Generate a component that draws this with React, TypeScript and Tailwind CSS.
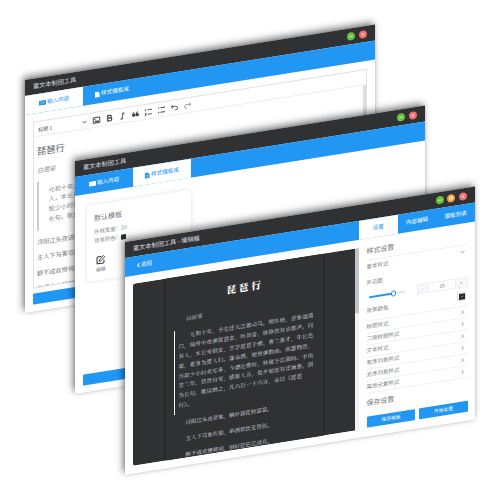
import React from 'react'

const PREFACE = [
  '元和十年，予左迁九江郡司马。明年秋，送客湓浦',
  '口，闻舟中夜弹琵琶者，听其音，铮铮然有京都声。问',
  '其人，本长安倡女，尝学琵琶于穆、曹二善才，年长色',
  '衰，委身为贾人妇。遂命酒，使快弹数曲。曲罢悯然，',
  '自叙少小时欢乐事，今漂沦憔悴，转徙于江湖间。予出',
  '官二年，恬然自安，感斯人言，是夕始觉有迁谪意。因',
  '为长句，歌以赠之，凡六百一十六言，命曰《琵琶',
  '行》。',
]
const VERSES = [
  '浔阳江头夜送客，枫叶荻花秋瑟瑟。',
  '主人下马客在船，举酒欲饮无管弦。',
  '醉不成欢惨将别，别时茫茫江浸月。',
]
const STYLE_GROUPS = ['标题样式', '二级标题样式', '文本样式', '有序列表样式', '无序列表样式', '其他元素样式']

function Dot({ kind }: { kind: 'min' | 'max' | 'close' }) {
  const bg = kind === 'min' ? 'bg-[#67c23a]' : kind === 'max' ? 'bg-[#f0a035]' : 'bg-[#f56c6c]'
  return (
    <span className={`flex size-[8px] items-center justify-center rounded-full ${bg}`}>
      <svg viewBox="0 0 8 8" className="size-[8px]" fill="none" stroke="#fff" strokeWidth="0.7">
        {kind === 'min' && <path d="M2.2 4h3.6" />}
        {kind === 'max' && <path d="M2.6 3.4h2.4v2.2H2.6zM3.4 3.2V2.4h2.2v2.2H5" />}
        {kind === 'close' && <path d="M2.6 2.6l2.8 2.8M5.4 2.6L2.6 5.4" />}
      </svg>
    </span>
  )
}

function Window({ place, title, max, bar, children }: {
  place: string
  title: string
  max?: boolean
  bar: React.ReactNode
  children: React.ReactNode
}) {
  return (
    <section className={`absolute ${place} flex h-[233px] w-[350px] origin-top-left -skew-y-9 flex-col bg-white shadow-[-2px_-3px_7px_rgba(0,0,0,0.5),0_0_3px_rgba(0,0,0,0.12)]`}>
      <header className="flex h-[16px] shrink-0 items-center justify-between bg-[#303133] pr-[8px] pl-[8px]">
        <h1 className="text-[6.2px] leading-[10px] whitespace-pre text-[#dcdee2]">{title}</h1>
        <div className="flex gap-[3.7px]">
          <Dot kind="min" />
          {max && <Dot kind="max" />}
          <Dot kind="close" />
        </div>
      </header>
      <nav className="flex h-[19.3px] shrink-0 bg-[#2196f3] text-[5.6px] leading-none text-white">{bar}</nav>
      {children}
    </section>
  )
}

function KeyboardIcon() {
  return (
    <svg viewBox="0 0 14 10" className="h-[5px] w-[7px]">
      <rect width="14" height="10" rx="1.4" fill="currentColor" />
      <path d="M2 3h10M2 5.2h10M4 7.6h6" stroke="#fff" strokeOpacity="0.6" strokeWidth="0.9" strokeDasharray="1.4 0.8" />
    </svg>
  )
}

function DocIcon() {
  return (
    <svg viewBox="0 0 10 13" className="h-[6px] w-[4.6px]">
      <path d="M0 1a1 1 0 011-1h5l4 4v8a1 1 0 01-1 1H1a1 1 0 01-1-1z" fill="currentColor" />
      <path d="M2.4 6.4h5.2M2.4 9.4h5.2" stroke="#fff" strokeOpacity="0.8" strokeWidth="1.1" />
    </svg>
  )
}

function MainTabs({ active }: { active: number }) {
  const on = 'bg-white text-[#2196f3]'
  return (
    <>
      <div className={`flex w-[58.2px] items-center justify-center gap-[1px] ${active === 0 ? on : ''}`}>
        <KeyboardIcon />输入内容
      </div>
      <div className={`flex w-[58.2px] items-center justify-center gap-[1px] ${active === 1 ? on : ''}`}>
        <DocIcon />样式模板库
      </div>
    </>
  )
}

function Tool({ children }: { children: React.ReactNode }) {
  return (
    <svg viewBox="0 0 18 18" className="size-[9px]" fill="none" stroke="#3c3c3c" strokeWidth="1.8">
      {children}
    </svg>
  )
}

function EditorWindow() {
  return (
    <Window place="top-[80.3px] left-[25px]" title="富文本制图工具" bar={<MainTabs active={0} />}>
      <div className="mx-[8px] mt-[8px] flex h-[167px] shrink-0 flex-col border border-[#e2e2e4] text-[#606266]">
        <div className="flex h-[15px] shrink-0 items-center border-b border-[#ededed] pl-[4px]">
          <div className="flex w-[49px] items-center justify-between">
            <span className="text-[5.2px] leading-none text-[#555]">标题 1</span>
            <svg viewBox="0 0 10 6" className="h-[3px] w-[5px]" fill="none" stroke="#444" strokeWidth="1.6"><path d="M1 1l4 4 4-4" /></svg>
          </div>
          <div className="ml-[4.5px] flex gap-[4.1px]">
            <Tool>
              <path d="M2.5 3.5h13v11h-13z" />
              <path d="M4 13l3.5-4 2.5 2 2-2 2.5 4z" fill="#3c3c3c" stroke="none" />
              <circle cx="6" cy="7" r="1.3" fill="#3c3c3c" stroke="none" />
            </Tool>
            <Tool><path strokeWidth="2.4" d="M5.5 3.5h4.500a2.500 2.500 0 010 5.200H5.500zM5.500 8.700h5.200a2.800 2.800 0 010 5.800H5.500z" /></Tool>
            <Tool><path d="M8 3.500h5M5 14.500h5M10.500 3.500l-3 11" /></Tool>
            <Tool>
              <path d="M3 9h5v4H3zM3 10c0-3 1-4 4-5M10 9h5v4h-5zM10 10c0-3 1-4 4-5" fill="#3c3c3c" strokeWidth="1.200" />
            </Tool>
            <Tool><path d="M7 4.500h9M7 13.500h9M3.200 2.500v4M2 11.500h2.500l-2.500 3.500h2.500" strokeWidth="1.600" /></Tool>
            <Tool><path d="M7 4.500h9M7 13.500h9M2 4.500h2.500M2 13.500h2.500" strokeWidth="1.800" /></Tool>
            <Tool><path d="M6 3L2.500 6.500 6 10M3 6.500h8.500a3.500 3.500 0 010 7H10" strokeWidth="1.600" /></Tool>
            <svg viewBox="0 0 18 18" className="size-[9px]" fill="none" stroke="#888" strokeWidth="1.500"><path d="M12 3l3.500 3.500L12 10M15 6.500H6.500a3.500 3.500 0 000 7H8" /></svg>
          </div>
        </div>
        <div className="flex min-h-0 flex-1 justify-between">
          <article className="overflow-hidden pl-[3px] text-[6.2px] whitespace-nowrap">
            <h2 className="mt-[7px] text-[9.3px] leading-[14px]">琵琶行</h2>
            <p className="mt-[7.5px] leading-[10px] text-[#909296] italic">白居易</p>
            <blockquote className="mt-[6px] h-[49px] border-l-2 border-[#ccc] py-[5px] pl-[9.5px] leading-[9.6px] text-[#8c8e92]">
              <p>元和十年，予左迁九江郡</p>
              <p>人，本长安倡女，尝学琵</p>
              <p>叙少小时欢乐事，今漂沦</p>
              <p>长句，歌以赠之，凡六百</p>
            </blockquote>
            <div className="mt-[4px] leading-[15.4px] text-[#7c7e82]">
              {VERSES.map((v) => <p key={v}>{v}</p>)}
              <p>忽闻水上琵琶声</p>
            </div>
          </article>
          <div className="w-[3px] bg-[#dcdde8]" />
        </div>
      </div>
      <div className="mx-[8px] mt-[5px] h-[10.5px] shrink-0 rounded-[1px] bg-[#2196f3]" />
    </Window>
  )
}

function TemplatesWindow() {
  return (
    <Window place="top-[161px] left-[75px]" title="富文本制图工具" bar={<MainTabs active={1} />}>
      <div className="mx-[8px] h-[180px] shrink-0 pt-[11.5px] pl-[4px]">
        <div className="h-[76px] w-[103.5px] rounded-[4px] bg-white pt-[8.5px] pl-[7px] text-[5.4px] text-[#8c8e92] shadow-[0_0_5px_rgba(0,0,0,0.12)]">
          <h2 className="text-[7px] leading-[10px] text-[#707276]">默认模板</h2>
          <p className="mt-[5px] leading-[9px]">外框宽度：20</p>
          <p className="flex items-center leading-[9px]">背景颜色：<span className="ml-[0.5px] size-[5px] rounded-[0.5px] bg-[#2b2c2e]" /></p>
          <div className="mt-[10px] ml-[2px] flex w-[9.5px] flex-col items-center">
            <svg viewBox="0 0 18 18" className="size-[9.5px]" fill="none" stroke="#303133" strokeWidth="1.9">
              <path d="M10 3H3a1 1 0 00-1 1v11a1 1 0 001 1h11a1 1 0 001-1v-5" />
              <path d="M7 8.5l6.8-6.8 2.7 2.7-6.8 6.8-3.4.7z" strokeWidth="1.5" />
            </svg>
            <span className="mt-[1px] text-[4.7px] leading-[7px] whitespace-nowrap text-[#707276]">编辑</span>
          </div>
        </div>
      </div>
      <div className="mx-[8px] h-[10.5px] shrink-0 rounded-[1px] bg-[#2196f3]" />
    </Window>
  )
}

function Preview() {
  return (
    <div className="flex h-[182.3px] w-[225.6px] shrink-0 overflow-hidden rounded-l-[2px]">
      <div className="flex w-[222px] justify-center bg-[#303133]">
        <article className="w-[157px] bg-[#303133] pt-[14px] font-['Noto_Serif_CJK_SC','Noto_Sans_CJK_SC',serif] text-[5.45px] whitespace-nowrap text-[#dedfe2] shadow-[0_0_3px_rgba(0,0,0,0.75)]">
          <h2 className="pl-[2px] text-center text-[9.7px] leading-[14px] font-black tracking-[2.6px] text-white">琵琶行</h2>
          <p className="mt-[10.5px] pl-[20px] leading-[10px] italic">白居易</p>
          <div className="mt-[5.5px] ml-[8px] h-[84px] border-l border-white pt-[2.7px] pl-[4px] leading-[9.8px] tracking-[0.18px]">
            {PREFACE.map((line, i) => <p key={line} className={i === 0 ? 'pl-[11.3px]' : ''}>{line}</p>)}
          </div>
          <div className="mt-[2.5px] pl-[20px] leading-[15.8px]">
            {VERSES.map((v) => <p key={v}>{v}</p>)}
          </div>
        </article>
      </div>
      <div className="w-[3.6px] bg-[#f0f3f8]"><div className="h-[65px] bg-[#bfc3cc]" /></div>
    </div>
  )
}

function Chevron({ down }: { down?: boolean }) {
  return (
    <svg viewBox="0 0 10 10" className="mr-[3px] size-[5px]" fill="none" stroke="#808286" strokeWidth="1.4">
      <path d={down ? 'M1 3l4 4 4-4' : 'M3 1l4 4-4 4'} />
    </svg>
  )
}

function Settings() {
  return (
    <aside className="ml-[8px] w-[101px] text-[5.45px] leading-none text-[#808286]">
      <h2 className="flex h-[14.5px] items-center border-b border-[#f0f1f3] pb-[4px] text-[6.9px] text-[#707276]">样式设置</h2>
      <div className="flex h-[13px] items-center justify-between"><span>基本样式</span><Chevron down /></div>
      <div className="mt-[5px] flex h-[8px] items-center">外边距</div>
      <div className="mt-[5.5px] flex h-[10.5px] items-center justify-between">
        <div className="ml-[2px] flex items-center">
          <div className="h-[2px] w-[22px] rounded-l-full bg-[#2196f3]" />
          <div className="size-[5.5px] rounded-full border border-[#2196f3] bg-white" />
          <div className="h-[2px] w-[9px] rounded-r-full bg-[#e1e4eb]" />
        </div>
        <div className="flex h-[10.5px] w-[51px] overflow-hidden rounded-[1px] border border-[#ebedf1] text-[4.8px]">
          <span className="flex w-[11.5px] items-center justify-center border-r border-[#ebedf1] bg-[#f5f7fa] text-[#a8abb2]">−</span>
          <span className="flex flex-1 items-center justify-center">20</span>
          <span className="flex w-[11.5px] items-center justify-center border-l border-[#ebedf1] bg-[#f5f7fa]">+</span>
        </div>
      </div>
      <div className="mt-[4px] flex h-[9px] items-center justify-between">
        <span>背景颜色</span>
        <span className="mr-[1.5px] flex size-[9px] items-center justify-center rounded-[1px] border border-[#dfe1e6]">
          <span className="flex size-[6px] items-center justify-center bg-[#222325]">
            <svg viewBox="0 0 10 10" className="size-[4px]" fill="none" stroke="#aaa" strokeWidth="1.6"><path d="M1 3l4 4 4-4" /></svg>
          </span>
        </span>
      </div>
      <ul className="mt-[4.5px] border-t border-[#f0f1f3]">
        {STYLE_GROUPS.map((g) => (
          <li key={g} className="flex h-[12px] items-center justify-between border-b border-[#f0f1f3]"><span>{g}</span><Chevron /></li>
        ))}
      </ul>
      <h2 className="mt-[4px] flex h-[11px] items-center text-[6.9px] text-[#707276]">保存设置</h2>
      <div className="mt-[8.5px] flex gap-[4px] text-[4.7px] text-white">
        <button className="flex h-[10.5px] w-[49px] items-center justify-center rounded-[1px] bg-[#2196f3]">保存模板</button>
        <button className="flex h-[10.5px] w-[48.5px] items-center justify-center rounded-[1px] bg-[#2196f3]">开始处理</button>
      </div>
    </aside>
  )
}

function DesignerWindow() {
  const bar = (
    <>
      <div className="flex w-[234px] items-center pl-[12px]">
        <svg viewBox="0 0 6 10" className="mr-[1px] h-[5px] w-[3px]" fill="none" stroke="#fff" strokeWidth="2"><path d="M5 1L1 5l4 4" /></svg>
        返回
      </div>
      <div className="flex w-[38.7px] items-center justify-center bg-white text-[#2196f3]">设置</div>
      <div className="flex w-[38.7px] items-center justify-center">内容编辑</div>
      <div className="flex flex-1 items-center justify-center">模板列表</div>
    </>
  )
  return (
    <Window place="top-[241.9px] left-[125px]" title="富文本制图工具 - 编辑器" max bar={bar}>
      <main className="flex pt-[7.5px] pl-[8px]">
        <Preview />
        <Settings />
      </main>
    </Window>
  )
}

export default function App() {
  return (
    <div className="relative h-[500px] w-[500px] overflow-hidden bg-white font-['Noto_Sans_CJK_SC',sans-serif]">
      <EditorWindow />
      <TemplatesWindow />
      <DesignerWindow />
    </div>
  )
}
